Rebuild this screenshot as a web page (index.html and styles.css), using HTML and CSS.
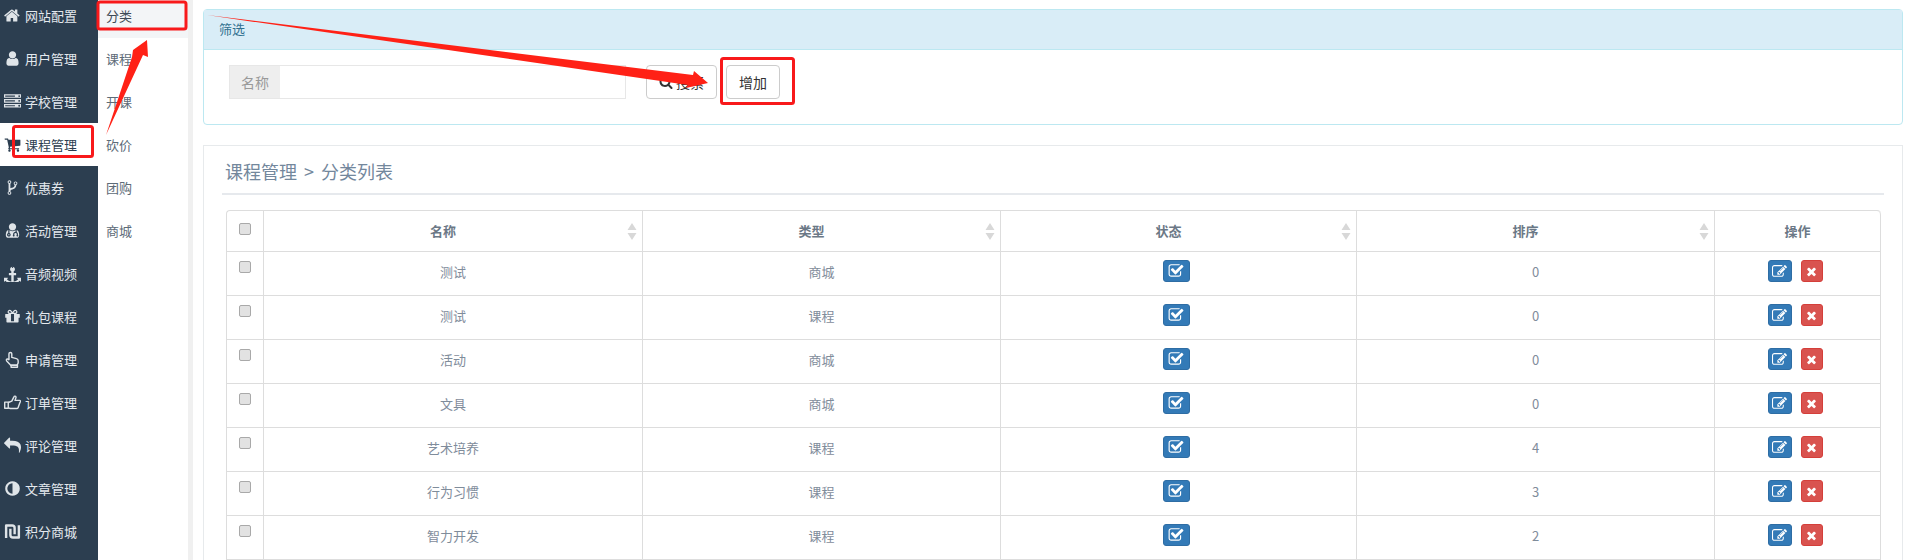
FILE: index.html
```html
<!DOCTYPE html>
<html lang="zh-CN">
<head>
<meta charset="utf-8">
<title>分类列表</title>
<link rel="stylesheet" href="styles.css">
</head>
<body>
<svg class="defs" width="0" height="0">
  <symbol id="i-home" viewBox="0 0 1792 1792"><path d="M1408 992v480q0 26-19 45t-45 19h-384v-384h-256v384h-384q-26 0-45-19t-19-45v-480q0-1 .5-3t.5-3l575-474 575 474q1 2 1 6zm223-69l-62 74q-8 9-21 11h-3q-13 0-21-7l-692-577-692 577q-12 8-24 7-13-2-21-11l-62-74q-8-10-7-23.5t11-21.5l719-599q32-26 76-26t76 26l244 204v-195q0-14 9-23t23-9h192q14 0 23 9t9 23v408l219 182q10 8 11 21.5t-7 23.5z"/></symbol>
  <symbol id="i-user" viewBox="0 0 1792 1792"><path d="M1536 1399q0 109-62.5 187t-150.5 78h-854q-88 0-150.5-78t-62.5-187q0-85 8.5-160.5t31.5-152 58.5-131 94-89 134.5-34.5q131 128 313 128t313-128q76 0 134.5 34.5t94 89 58.5 131 31.5 152 8.5 160.5zm-256-887q0 159-112.5 271.5t-271.5 112.5-271.5-112.5-112.5-271.5 112.5-271.5 271.5-112.5 271.5 112.5 112.5 271.5z"/></symbol>
  <symbol id="i-server" viewBox="0 0 1792 1792"><path d="M128 1408h1024v-128h-1024v128zm0-512h1024v-128h-1024v128zm1568 448q0-40-28-68t-68-28-68 28-28 68 28 68 68 28 68-28 28-68zm-1568-960h1024v-128h-1024v128zm1568 448q0-40-28-68t-68-28-68 28-28 68 28 68 68 28 68-28 28-68zm0-512q0-40-28-68t-68-28-68 28-28 68 28 68 68 28 68-28 28-68zm96 832v384h-1792v-384h1792zm0-512v384h-1792v-384h1792zm0-512v384h-1792v-384h1792z"/></symbol>
  <symbol id="i-cart" viewBox="0 0 1792 1792"><path d="M704 1536q0 52-38 90t-90 38-90-38-38-90 38-90 90-38 90 38 38 90zm896 0q0 52-38 90t-90 38-90-38-38-90 38-90 90-38 90 38 38 90zm128-1088v512q0 24-16.5 42.5t-40.5 21.5l-1044 122q13 60 13 70 0 16-24 64h920q26 0 45 19t19 45-19 45-45 19h-1024q-26 0-45-19t-19-45q0-11 8-31.5t16-36 21.5-40 15.5-29.5l-177-823h-204q-26 0-45-19t-19-45 19-45 45-19h256q16 0 28.5 6.5t19.5 15.5 13 24.5 8 26 5.5 29.5 4.5 26h1201q26 0 45 19t19 45z"/></symbol>
  <symbol id="i-fork" viewBox="0 0 1792 1792"><path d="M672 1472q0-40-28-68t-68-28-68 28-28 68 28 68 68 28 68-28 28-68zm0-1152q0-40-28-68t-68-28-68 28-28 68 28 68 68 28 68-28 28-68zm640 128q0-40-28-68t-68-28-68 28-28 68 28 68 68 28 68-28 28-68zm96 0q0 52-26 96.5t-70 69.5q-2 287-226 414-67 38-203 81-128 40-169.5 71t-41.5 100v26q44 25 70 69.5t26 96.5q0 80-56 136t-136 56-136-56-56-136q0-52 26-96.5t70-69.5v-820q-44-25-70-69.5t-26-96.5q0-80 56-136t136-56 136 56 56 136q0 52-26 96.5t-70 69.5v497q54-26 154-57 55-17 87.5-29.5t70.5-31 59-39.5 40.5-51 28-69.5 8.5-91.5q-44-25-70-69.5t-26-96.5q0-80 56-136t136-56 136 56 56 136z"/></symbol>
  <symbol id="i-usermd" viewBox="0 0 1792 1792"><path d="M576 1344q0 26-19 45t-45 19-45-19-19-45 19-45 45-19 45 19 19 45zm1024 61q0 121-73 190t-194 69h-874q-121 0-194-69t-73-190q0-68 5.5-131t24-138 47.5-132.5 81-103 120-60.5q-22 52-22 120v203q-58 20-93 70t-35 111q0 80 56 136t136 56 136-56 56-136q0-61-35.5-111t-92.5-70v-203q0-62 25-93 132 104 295 104t295-104q25 31 25 93v64q-106 0-181 75t-75 181v89q-32 29-32 71 0 40 28 68t68 28 68-28 28-68q0-42-32-71v-89q0-52 38-90t90-38 90 38 38 90v89q-32 29-32 71 0 40 28 68t68 28 68-28 28-68q0-42-32-71v-89q0-68-34.5-127.5t-93.5-93.5q0-10 .5-42.5t0-48-2.5-41.5-7-47-13-40q68 15 120 60.5t81 103 47.5 132.5 24 138 5.5 131zm-320-893q0 159-112.5 271.5t-271.5 112.5-271.5-112.5-112.5-271.5 112.5-271.5 271.5-112.5 271.5 112.5 112.5 271.5z"/></symbol>
  <symbol id="i-anchor" viewBox="0 0 1792 1792"><path d="M960 256q0-26-19-45t-45-19-45 19-19 45 19 45 45 19 45-19 19-45zm832 1120v352q0 22-20 30-8 2-12 2-12 0-23-9l-93-93q-119 143-318.5 226.5t-429.5 83.5-429.5-83.5-318.5-226.5l-93 93q-9 9-23 9-4 0-12-2-20-8-20-30v-352q0-14 9-23t23-9h352q22 0 30 20 8 19-7 35l-100 100q67 91 189.5 153.5t271.5 82.5v-647h-192q-26 0-45-19t-19-45v-128q0-26 19-45t45-19h192v-163q-58-34-93-92.5t-35-128.5q0-106 75-181t181-75 181 75 75 181q0 70-35 128.5t-93 92.5v163h192q26 0 45 19t19 45v128q0 26-19 45t-45 19h-192v647q149-20 271.5-82.5t189.5-153.5l-100-100q-15-16-7-35 8-20 30-20h352q14 0 23 9t9 23z"/></symbol>
  <symbol id="i-gift" viewBox="0 0 1792 1792"><path d="M1056 1356v-716h-320v716q0 25 18 38.5t46 13.5h192q28 0 46-13.5t18-38.5zm-456-844h195l-126-161q-26-31-69-31-40 0-68 28t-28 68 28 68 68 28zm688-96q0-40-28-68t-68-28q-43 0-69 31l-125 161h194q40 0 68-28t28-68zm376 256v320q0 14-9 23t-23 9h-96v416q0 40-28 68t-68 28h-1088q-40 0-68-28t-28-68v-416h-96q-14 0-23-9t-9-23v-320q0-14 9-23t23-9h440q-93 0-158.5-65.5t-65.5-158.5 65.5-158.5 158.5-65.5q107 0 168 77l128 165 128-165q61-77 168-77 93 0 158.5 65.5t65.5 158.5-65.5 158.5-158.5 65.5h440q14 0 23 9t9 23z"/></symbol>
  <symbol id="i-handup" viewBox="0 0 24 24"><path class="outline" d="M9 2c1.100 0 2 .9 2 2v5l6.500 1.800c1.500.4 2.500 1.600 2.500 3V17l-1.500 3H9.500L3.800 14c-1-1.200-.3-2.800 1-2.800.8 0 1.500.4 2.200 1V4c0-1.100.9-2 2-2z"/><path class="outline" d="M10 20h9v3h-9z"/></symbol>
  <symbol id="i-thumb" viewBox="0 0 24 24"><path class="outline" d="M1 11.500h5v8.500H1z"/><path class="outline" d="M6 12l5-2 3-6c.5-1.500 3-1.500 3 .8L15.500 9H22c1.500 0 1.800 2 .5 3L20 19c-.3.800-1 1.500-2 1.500H9l-3-1"/></symbol>
  <symbol id="i-reply" viewBox="0 0 1792 1792"><path d="M1792 1120q0 166-127 451-3 7-10.500 24t-13.500 30-13 22q-12 17-28 17-15 0-23.500-10t-8.500-25q0-9 2.500-26.500t2.500-23.500q5-68 5-123 0-101-17.500-181t-48.500-138.500-80-101-105.500-69.500-133-42.500-154-21.500-175.500-6h-224v256q0 26-19 45t-45 19-45-19l-512-512q-19-19-19-45t19-45l512-512q19-19 45-19t45 19 19 45v256h224q713 0 875 403 53 134 53 333z"/></symbol>
  <symbol id="i-adjust" viewBox="0 0 1792 1792"><path d="M896 1440v-1088q-148 0-273 73t-198 198-73 273 73 273 198 198 273 73zm768-544q0 209-103 385.500t-279.500 279.500-385.500 103-385.500-103-279.500-279.500-103-385.500 103-385.500 279.500-279.500 385.500-103 385.500 103 279.500 279.500 103 385.500z"/></symbol>
  <symbol id="i-ils" viewBox="0 0 24 24"><path class="outline thick" d="M3 21V3.500h8.500c2.200 0 3.500 1.500 3.500 3.500v9"/><path class="outline thick" d="M21 3v17.500h-8.500C10.300 20.500 9 19 9 17V8"/></symbol>
  <symbol id="i-search" viewBox="0 0 1792 1792"><path d="M1216 832q0-185-131.500-316.500t-316.500-131.500-316.500 131.500-131.500 316.500 131.500 316.500 316.500 131.500 316.500-131.500 131.500-316.500zm512 832q0 52-38 90t-90 38q-54 0-90-38l-343-342q-179 124-399 124-143 0-273.500-55.500t-225-150-150-225-55.500-273.500 55.500-273.500 150-225 225-150 273.500-55.500 273.500 55.500 225 150 150 225 55.500 273.500q0 220-124 399l343 343q37 37 37 90z"/></symbol>
  <symbol id="i-check" viewBox="0 0 1792 1792"><path d="M1472 930v318q0 119-84.500 203.500t-203.500 84.500h-832q-119 0-203.500-84.500t-84.500-203.500v-832q0-119 84.500-203.500t203.500-84.500h832q63 0 117 25 15 7 18 23 3 17-9 29l-49 49q-10 10-23 10-3 0-9-2-23-6-45-6h-832q-66 0-113 47t-47 113v832q0 66 47 113t113 47h832q66 0 113-47t47-113v-254q0-13 9-22l64-64q10-10 23-10 6 0 12 3 20 8 20 29zm231-489l-814 814q-24 24-57 24t-57-24l-430-430q-24-24-24-57t24-57l110-110q24-24 57-24t57 24l263 263 647-647q24-24 57-24t57 24l110 110q24 24 24 57t-24 57z"/></symbol>
  <symbol id="i-edit" viewBox="0 0 1792 1792"><path d="M888 1184l116-116-152-152-116 116v56h96v96h56zm440-720q-16-16-33 1l-350 350q-17 17-1 33t33-1l350-350q17-17 1-33zm80 594v190q0 119-84.500 203.500t-203.500 84.500h-832q-119 0-203.500-84.500t-84.500-203.500v-832q0-119 84.500-203.500t203.500-84.500h832q63 0 117 25 15 7 18 23 3 17-9 29l-49 49q-14 14-32 8-23-6-45-6h-832q-66 0-113 47t-47 113v832q0 66 47 113t113 47h832q66 0 113-47t47-113v-126q0-13 9-22l64-64q15-15 35-7t20 29zm-96-738l288 288-672 672h-288v-288zm444 132l-92 92-288-288 92-92q28-28 68-28t68 28l152 152q28 28 28 68t-28 68z"/></symbol>
  <symbol id="i-times" viewBox="0 0 1792 1792"><path d="M1490 1322q0 40-28 68l-136 136q-28 28-68 28t-68-28l-294-294-294 294q-28 28-68 28t-68-28l-136-136q-28-28-28-68t28-68l294-294-294-294q-28-28-28-68t28-68l136-136q28-28 68-28t68 28l294 294 294-294q28-28 68-28t68 28l136 136q28 28 28 68t-28 68l-294 294 294 294q28 28 28 68z"/></symbol>
  <symbol id="i-sort" viewBox="0 0 10 17"><path d="M5 0l4.500 7h-9zM5 17L.5 10h9z"/></symbol>
</svg>

<div class="app">
  <nav class="sidebar">
    <a class="nav-item first"><svg class="nav-icon"><use href="#i-home"/></svg>网站配置</a>
    <a class="nav-item"><svg class="nav-icon"><use href="#i-user"/></svg>用户管理</a>
    <a class="nav-item"><svg class="nav-icon"><use href="#i-server"/></svg>学校管理</a>
    <a class="nav-item active"><svg class="nav-icon"><use href="#i-cart"/></svg>课程管理</a>
    <a class="nav-item"><svg class="nav-icon"><use href="#i-fork"/></svg>优惠券</a>
    <a class="nav-item"><svg class="nav-icon"><use href="#i-usermd"/></svg>活动管理</a>
    <a class="nav-item"><svg class="nav-icon"><use href="#i-anchor"/></svg>音频视频</a>
    <a class="nav-item"><svg class="nav-icon"><use href="#i-gift"/></svg>礼包课程</a>
    <a class="nav-item"><svg class="nav-icon"><use href="#i-handup"/></svg>申请管理</a>
    <a class="nav-item"><svg class="nav-icon"><use href="#i-thumb"/></svg>订单管理</a>
    <a class="nav-item"><svg class="nav-icon"><use href="#i-reply"/></svg>评论管理</a>
    <a class="nav-item"><svg class="nav-icon"><use href="#i-adjust"/></svg>文章管理</a>
    <a class="nav-item"><svg class="nav-icon"><use href="#i-ils"/></svg>积分商城</a>
  </nav>

  <nav class="subnav">
    <a class="sub-item current">分类</a>
    <a class="sub-item">课程</a>
    <a class="sub-item">开课</a>
    <a class="sub-item">砍价</a>
    <a class="sub-item">团购</a>
    <a class="sub-item">商城</a>
  </nav>

  <main class="main">
    <section class="filter-panel">
      <div class="filter-head">筛选</div>
      <div class="filter-body">
        <div class="input-group">
          <span class="addon">名称</span>
          <input class="text-input" type="text">
        </div>
        <button class="btn btn-search"><svg class="btn-icon"><use href="#i-search"/></svg>搜索</button>
        <button class="btn btn-add">增加</button>
      </div>
    </section>

    <section class="list-panel">
      <h2 class="list-title">课程管理 &gt; 分类列表</h2>
      <table class="grid">
        <colgroup>
          <col class="c-check"><col class="c-name"><col class="c-type"><col class="c-state"><col class="c-order"><col class="c-act">
        </colgroup>
        <thead>
          <tr>
            <th class="cell-check"><input class="check" type="checkbox"></th>
            <th class="sortable">名称<svg class="sort"><use href="#i-sort"/></svg></th>
            <th class="sortable">类型<svg class="sort"><use href="#i-sort"/></svg></th>
            <th class="sortable">状态<svg class="sort"><use href="#i-sort"/></svg></th>
            <th class="sortable">排序<svg class="sort"><use href="#i-sort"/></svg></th>
            <th>操作</th>
          </tr>
        </thead>
        <tbody>
          <tr>
            <td class="cell-check"><input class="check" type="checkbox"></td>
            <td>测试</td><td>商城</td>
            <td><button class="act act-state"><svg class="act-icon"><use href="#i-check"/></svg></button></td>
            <td>0</td>
            <td><div class="acts"><button class="act act-edit"><svg class="edit-icon"><use href="#i-edit"/></svg></button><button class="act act-del"><svg class="del-icon"><use href="#i-times"/></svg></button></div></td>
          </tr>
          <tr>
            <td class="cell-check"><input class="check" type="checkbox"></td>
            <td>测试</td><td>课程</td>
            <td><button class="act act-state"><svg class="act-icon"><use href="#i-check"/></svg></button></td>
            <td>0</td>
            <td><div class="acts"><button class="act act-edit"><svg class="edit-icon"><use href="#i-edit"/></svg></button><button class="act act-del"><svg class="del-icon"><use href="#i-times"/></svg></button></div></td>
          </tr>
          <tr>
            <td class="cell-check"><input class="check" type="checkbox"></td>
            <td>活动</td><td>商城</td>
            <td><button class="act act-state"><svg class="act-icon"><use href="#i-check"/></svg></button></td>
            <td>0</td>
            <td><div class="acts"><button class="act act-edit"><svg class="edit-icon"><use href="#i-edit"/></svg></button><button class="act act-del"><svg class="del-icon"><use href="#i-times"/></svg></button></div></td>
          </tr>
          <tr>
            <td class="cell-check"><input class="check" type="checkbox"></td>
            <td>文具</td><td>商城</td>
            <td><button class="act act-state"><svg class="act-icon"><use href="#i-check"/></svg></button></td>
            <td>0</td>
            <td><div class="acts"><button class="act act-edit"><svg class="edit-icon"><use href="#i-edit"/></svg></button><button class="act act-del"><svg class="del-icon"><use href="#i-times"/></svg></button></div></td>
          </tr>
          <tr>
            <td class="cell-check"><input class="check" type="checkbox"></td>
            <td>艺术培养</td><td>课程</td>
            <td><button class="act act-state"><svg class="act-icon"><use href="#i-check"/></svg></button></td>
            <td>4</td>
            <td><div class="acts"><button class="act act-edit"><svg class="edit-icon"><use href="#i-edit"/></svg></button><button class="act act-del"><svg class="del-icon"><use href="#i-times"/></svg></button></div></td>
          </tr>
          <tr>
            <td class="cell-check"><input class="check" type="checkbox"></td>
            <td>行为习惯</td><td>课程</td>
            <td><button class="act act-state"><svg class="act-icon"><use href="#i-check"/></svg></button></td>
            <td>3</td>
            <td><div class="acts"><button class="act act-edit"><svg class="edit-icon"><use href="#i-edit"/></svg></button><button class="act act-del"><svg class="del-icon"><use href="#i-times"/></svg></button></div></td>
          </tr>
          <tr>
            <td class="cell-check"><input class="check" type="checkbox"></td>
            <td>智力开发</td><td>课程</td>
            <td><button class="act act-state"><svg class="act-icon"><use href="#i-check"/></svg></button></td>
            <td>2</td>
            <td><div class="acts"><button class="act act-edit"><svg class="edit-icon"><use href="#i-edit"/></svg></button><button class="act act-del"><svg class="del-icon"><use href="#i-times"/></svg></button></div></td>
          </tr>
        </tbody>
      </table>
    </section>
  </main>
</div>

<svg class="annotations" viewBox="0 0 1909 560" width="1909" height="560">
  <rect class="mark" x="98" y="2" width="88" height="27" rx="2"/>
  <rect class="mark" x="13.500" y="126.500" width="79" height="30" rx="2"/>
  <rect class="mark" x="721.500" y="58.500" width="72" height="45" rx="2"/>
  <polygon class="arrow" points="207,15 693,75 694,71 708,83 686,88 688,85"/>
  <polygon class="arrow" points="106,135 132,57 133,50 147,40 148,57 143,55"/>
</svg>
</body>
</html>
```

FILE: styles.css
```css
* { box-sizing: border-box; }
html, body { margin: 0; padding: 0; height: 560px; overflow: hidden; background: #fff; }
body {
  position: relative;
  font-family: "Noto Sans CJK SC", "Liberation Sans", sans-serif;
  font-size: 13px;
  color: #7b8794;
}
.defs { position: absolute; }
.outline { fill: none; stroke: currentColor; stroke-width: 2; stroke-linejoin: round; }
.thick { stroke-width: 3.4; }
symbol path { fill: currentColor; }

.app { display: flex; height: 560px; }

.sidebar { width: 98px; flex: none; background: #2c3e50; }
.nav-item {
  display: flex;
  align-items: center;
  gap: 4px;
  height: 43px;
  padding-left: 4px;
  padding-bottom: 1px;
  color: #e4e9ee;
  white-space: nowrap;
}
.nav-item.first { height: 37px; padding-bottom: 7px; }
.nav-item.active { background: #fff; color: #2c3e50; }
.nav-icon { width: 17px; height: 17px; flex: none; fill: currentColor; color: #dfe4e8; }
.active .nav-icon { color: #2c3e50; }

.subnav { width: 95px; flex: none; background: #fff; border-right: 5px solid #f0f0f0; }
.sub-item {
  display: flex;
  align-items: center;
  height: 43px;
  padding-left: 8px;
  padding-bottom: 2px;
  color: #5d6b78;
}
.sub-item.current { height: 38px; padding-bottom: 7px; background: #f3f5f7; color: #3d4a56; }

.main { flex: 1; min-width: 0; padding: 9px 6px 0 10px; }

.filter-panel {
  height: 116px;
  border: 1px solid #bce8f1;
  border-radius: 4px;
}
.filter-head {
  height: 40px;
  padding-left: 15px;
  padding-bottom: 2px;
  display: flex;
  align-items: center;
  background: #d9edf7;
  border-bottom: 1px solid #bce8f1;
  color: #31708f;
}
.filter-body { display: flex; align-items: flex-start; padding-top: 15px; padding-left: 25px; }
.input-group { display: flex; width: 397px; height: 34px; border: 1px solid #e7e7e7; }
.addon {
  width: 50px;
  flex: none;
  display: flex;
  align-items: center;
  justify-content: center;
  background: #eee;
  color: #999;
  font-size: 14px;
}
.text-input { flex: 1; min-width: 0; border: 0; background: #fff; }
.btn {
  height: 34px;
  display: inline-flex;
  align-items: center;
  justify-content: center;
  background: #fff;
  border: 1px solid #ccc;
  border-radius: 4px;
  color: #333;
  font: inherit;
  font-size: 14px;
  padding: 0;
}
.btn-search { width: 71px; margin-left: 20px; gap: 3px; }
.btn-add { width: 54px; margin-left: 9px; }
.btn-icon { width: 14px; height: 14px; color: #333; }

.list-panel {
  margin-top: 20px;
  height: 415px;
  padding: 0 18px;
  border: 1px solid #e7eaec;
  border-bottom: 0;
}
.list-title {
  margin: 0;
  height: 49px;
  padding-left: 3px;
  padding-top: 2px;
  display: flex;
  align-items: center;
  font-size: 18px;
  font-weight: 400;
  word-spacing: 3px;
  color: #73879c;
  border-bottom: 2px solid #e6e9ed;
}
.grid {
  table-layout: fixed;
  width: 1654px;
  margin: 15px 0 0 4px;
  border-collapse: separate;
  border-spacing: 0;
  border-top: 1px solid #ddd;
  border-left: 1px solid #ddd;
  border-top-left-radius: 4px;
  border-top-right-radius: 4px;
}
.c-check { width: 37px; }
.c-name { width: 379px; }
.c-type { width: 358px; }
.c-state { width: 356px; }
.c-order { width: 358px; }
.c-act { width: 166px; }
.grid th, .grid td {
  border-right: 1px solid #ddd;
  border-bottom: 1px solid #ddd;
  text-align: center;
  padding: 0;
  vertical-align: middle;
}
.grid th { height: 41px; padding-bottom: 2px; font-weight: 700; color: #6b7886; position: relative; }
.grid td { height: 44px; padding-bottom: 5px; color: #7f8c9b; }
.grid th:last-child { border-top-right-radius: 4px; }
.grid th.sortable { padding-right: 20px; }
.cell-check { vertical-align: top !important; }
.grid th.cell-check { padding-top: 12px; padding-bottom: 0; }
.grid td.cell-check { padding-top: 9px; padding-bottom: 0; }
.check {
  appearance: none;
  -webkit-appearance: none;
  display: block;
  width: 12px;
  height: 12px;
  margin: 0 auto;
  background: #e2e2e2;
  border: 1px solid #a9a9a9;
  border-radius: 2px;
}
.sort {
  position: absolute;
  right: 5px;
  top: 12px;
  width: 10px;
  height: 17px;
  color: #d8d8d8;
}
.act {
  display: inline-flex;
  align-items: center;
  justify-content: center;
  height: 22px;
  padding: 0;
  border-radius: 3px;
  vertical-align: middle;
  color: #fff;
}
.act-state { width: 27px; margin: 0 5px 0 0; background: #337ab7; border: 1px solid #2e6da4; }
.act-edit { width: 24px; background: #337ab7; border: 1px solid #2e6da4; }
.act-del { width: 22px; margin-left: 9px; background: #d9534f; border: 1px solid #d43f3a; }
.act-icon { width: 16px; height: 16px; fill: currentColor; }
.edit-icon { width: 15px; height: 15px; fill: currentColor; }
.del-icon { width: 13px; height: 13px; fill: currentColor; }
.acts { display: flex; justify-content: center; margin: 0 5px 0 0; }

.annotations { position: absolute; left: 0; top: 0; pointer-events: none; }
.mark { fill: none; stroke: #f8191b; stroke-width: 3; }
.arrow { fill: #ff2116; }
```
